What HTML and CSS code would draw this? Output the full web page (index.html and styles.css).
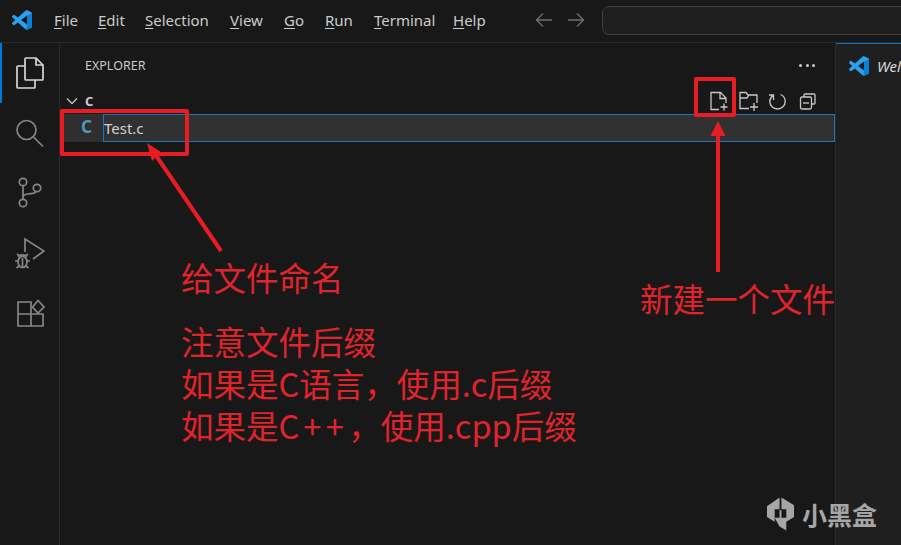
FILE: index.html
```html
<!DOCTYPE html>
<html lang="zh">
<head>
<meta charset="utf-8">
<title>VS Code</title>
<link rel="stylesheet" href="styles.css">
</head>
<body>
<div class="app">
  <header class="titlebar">
    <svg class="logo" viewBox="0 0 24 24"><path fill="#2ba1f0" d="M23.150 2.587 18.210.21a1.494 1.494 0 0 0-1.705.29l-9.460 8.630-4.120-3.128a.999.999 0 0 0-1.276.057L.327 7.261A1 1 0 0 0 .326 8.740L3.899 12 .326 15.260a1 1 0 0 0 .001 1.479L1.650 17.940a.999.999 0 0 0 1.276.057l4.120-3.128 9.460 8.630a1.492 1.492 0 0 0 1.704.29l4.942-2.377A1.500 1.500 0 0 0 24 20.060V3.939a1.500 1.500 0 0 0-.850-1.352zm-5.146 14.861L10.826 12l7.178-5.448v10.896z"/><path fill="#0b7fd0" d="M18.004 0v6.552L24 3.900v16.200a1.500 1.500 0 0 1-.850 1.313l-4.942 2.377a1.492 1.492 0 0 1-1.200.07L18.004 17.448z"/></svg>
    <nav class="menu">
      <span class="m1"><u>F</u>ile</span>
      <span class="m2"><u>E</u>dit</span>
      <span class="m3"><u>S</u>election</span>
      <span class="m4"><u>V</u>iew</span>
      <span class="m5"><u>G</u>o</span>
      <span class="m6"><u>R</u>un</span>
      <span class="m7"><u>T</u>erminal</span>
      <span class="m8"><u>H</u>elp</span>
    </nav>
    <div class="nav-arrows">
      <svg viewBox="0 0 20 20"><path d="M18 10H2.500M9 3.500 2.500 10 9 16.500"/></svg>
      <svg viewBox="0 0 20 20"><path d="M1 10h15.500M10 3.500l6.500 6.500-6.500 6.500"/></svg>
    </div>
    <div class="search"></div>
  </header>
  <div class="main">
    <aside class="activity">
      <div class="act act-on">
        <svg viewBox="0 0 30 32"><path class="bright" d="M10 9V2c0-.6.4-1 1-1h10l7 7v14c0 .6-.4 1-1 1H11c-.6 0-1-.4-1-1V9zM21 1v7h7M10 9H3c-.6 0-1 .4-1 1v20c0 .6.4 1 1 1h16c.6 0 1-.4 1-1v-7"/></svg>
      </div>
      <div class="act">
        <svg viewBox="0 0 30 32"><circle cx="11.500" cy="13" r="9.500"/><path d="m18.500 20 9.500 9.500"/></svg>
      </div>
      <div class="act">
        <svg viewBox="0 0 30 32"><circle cx="8" cy="5" r="3.700"/><circle cx="8" cy="26" r="3.700"/><circle cx="22" cy="11" r="3.700"/><path d="M8 8.700v13.600M8 21c0-2.500 1.500-3.800 4.500-4 4-.2 8-.5 8.500-2.500"/></svg>
      </div>
      <div class="act">
        <svg viewBox="0 0 30 32"><path d="M10 15V2l19 12-11 8"/><path d="M2 17l2.500 2M13 17l-2.500 2M0 24h3M15 24h-3M1.500 31 4 29M13.500 31 11 29"/><ellipse cx="7.500" cy="25" rx="4.500" ry="5.500"/><path d="M3.500 20.500c0-3.500 8-3.500 8 0M7.500 21v9.500"/></svg>
      </div>
      <div class="act">
        <svg viewBox="0 0 30 32"><path d="M3 5h13v24H3zM3 17h25v12H16M17.500 10 23 3.500 29 10l-6 6z"/></svg>
      </div>
    </aside>
    <section class="sidebar">
      <div class="explorer-head">
        <span class="explorer-title">EXPLORER</span>
        <span class="dots"><i></i><i></i><i></i></span>
      </div>
      <div class="folder-row">
        <svg class="chev" viewBox="0 0 12 8"><path d="m1 1.500 5 5 5-5"/></svg>
        <span class="folder-name">C</span>
        <div class="tools">
          <svg viewBox="0 0 20 20"><path d="M10 18.500H2V1.500h9.500L17 7v5M11 1.500V7.500h6M15 12.500v7M11.500 16h7"/></svg>
          <svg viewBox="0 0 20 20"><path d="M10 17.500H1V1.500h6l2 2.500h9v8M1 7h7l2-3M15 12v8M11 16h8"/></svg>
          <svg viewBox="0 0 20 20"><path d="M4 4.500C1.800 6 .8 8.300.8 10.500c0 4 3.400 7.500 7.700 7.500s7.700-3.500 7.700-7.500c0-3-1.800-5.800-4.700-7M4.500 9V4H0"/></svg>
          <svg viewBox="0 0 20 20"><path d="M5 6V4c0-.5.500-1 1-1h9c.500 0 1 .5 1 1v8c0 .5-.5 1-1 1h-2"/><rect x="1.500" y="6" width="11" height="12" rx="1.500"/><path d="M4 12h6"/></svg>
        </div>
      </div>
      <div class="file-row">
        <span class="file-icon">C</span>
        <span class="file-input">Test.c</span>
      </div>
    </section>
    <section class="editor">
      <div class="tab">
        <svg class="tab-logo" viewBox="0 0 24 24"><path fill="#2ba1f0" d="M23.150 2.587 18.210.21a1.494 1.494 0 0 0-1.705.29l-9.460 8.630-4.120-3.128a.999.999 0 0 0-1.276.057L.327 7.261A1 1 0 0 0 .326 8.740L3.899 12 .326 15.260a1 1 0 0 0 .001 1.479L1.650 17.940a.999.999 0 0 0 1.276.057l4.120-3.128 9.460 8.630a1.492 1.492 0 0 0 1.704.29l4.942-2.377A1.500 1.500 0 0 0 24 20.060V3.939a1.500 1.500 0 0 0-.850-1.352zm-5.146 14.861L10.826 12l7.178-5.448v10.896z"/><path fill="#0b7fd0" d="M18.004 0v6.552L24 3.900v16.200a1.500 1.500 0 0 1-.850 1.313l-4.942 2.377a1.492 1.492 0 0 1-1.200.07L18.004 17.448z"/></svg>
        <span class="tab-title">Welcome</span>
      </div>
    </section>
  </div>
  <div class="box box-file"></div>
  <div class="box box-new"></div>
  <svg class="arrows" viewBox="0 0 901 545">
    <path class="shaft" d="M221 251 155 154M718 272V130"/>
    <path class="head" d="M147 143 161 152 152 161zM718 121 725.500 136H710.500z"/>
  </svg>
  <p class="note note-name">给文件命名</p>
  <p class="note note-new">新建一个文件</p>
  <div class="note note-suffix">
    <p>注意文件后缀</p>
    <p>如果是C语言，使用.c后缀</p>
    <p>如果是C<span class="plus">++</span>，使用.cpp后缀</p>
  </div>
  <div class="watermark">
    <svg viewBox="0 0 30 36"><path fill="#a6a6a6" d="M14 1v12H9v13l-8-5V10zM16 1l13 8v12l-8 5V13h-5zM9 22h12v13l-7-4z"/><path fill="#a6a6a6" d="M14 14v8h2v-8z"/></svg>
    <span>小黑盒</span>
  </div>
</div>
</body>
</html>
```
FILE: styles.css
```css
* { box-sizing: border-box; }
html, body { margin: 0; padding: 0; background: #181818; }
body { font-family: "Noto Sans", "Noto Sans CJK SC", sans-serif; }
p { margin: 0; }
svg { display: block; }

.app { position: relative; width: 901px; height: 545px; overflow: hidden; display: flex; flex-direction: column; background: #181818; }

.titlebar { height: 43px; flex: none; display: flex; align-items: center; border-bottom: 1px solid #2b2b2b; padding-bottom: 2px; }
.logo { width: 20px; height: 20px; margin-left: 12px; flex: none; }
.menu { display: flex; margin-left: 22px; font-size: 15px; color: #cccccc; height: 20px; line-height: 20px; }
.menu u { text-underline-offset: 2px; text-decoration-thickness: 1px; }
.m1 { width: 44px; } .m2 { width: 47px; } .m3 { width: 85px; } .m4 { width: 54px; }
.m5 { width: 41px; } .m6 { width: 49px; } .m7 { width: 79px; } .m8 { width: 40px; }
.nav-arrows { display: flex; gap: 13px; margin-left: 41px; }
.nav-arrows svg { width: 20px; height: 20px; fill: none; stroke: #6f6f6f; stroke-width: 1.400; }
.search { width: 320px; height: 29px; margin-left: 15px; flex: none; background: #1f1f1f; border: 1px solid #3f3f3f; border-radius: 7px; }

.main { flex: 1; display: flex; min-height: 0; }

.activity { width: 60px; flex: none; border-right: 1px solid #2b2b2b; }
.act { height: 60px; display: flex; align-items: center; justify-content: center; }
.act svg { width: 30px; height: 32px; fill: none; stroke: #868686; stroke-width: 1.700; }
.act svg .bright { stroke: #d7d7d7; }
.act-on { box-shadow: inset 2px 0 0 #0078d4; }

.sidebar { width: 775px; flex: none; }
.explorer-head { height: 44px; display: flex; align-items: center; justify-content: space-between; padding: 0 20px 0 25px; }
.explorer-title { font-size: 12.500px; color: #cccccc; }
.dots { display: flex; gap: 3.500px; }
.dots i { width: 3px; height: 3px; border-radius: 50%; background: #cccccc; }

.folder-row { height: 28px; display: flex; align-items: center; }
.chev { width: 12px; height: 8px; margin-left: 6px; fill: none; stroke: #c0c0c0; stroke-width: 1.400; }
.folder-name { margin-left: 7px; font-size: 13px; font-weight: 700; color: #cccccc; }
.tools { margin-left: auto; margin-right: 16px; display: flex; gap: 10px; }
.tools svg { width: 20px; height: 20px; fill: none; stroke: #c8c8c8; stroke-width: 1.300; }

.file-row { height: 28px; display: flex; align-items: stretch; background: #2f2f2f; margin-top: -1px; }
.file-icon { width: 43px; padding-left: 21px; font-size: 17px; font-weight: 700; color: #519aba; line-height: 26px; }
.file-input { flex: 1; border: 1px solid #1b75bb; font-size: 15px; color: #d0d0d0; line-height: 26px; background: #313131; }

.editor { flex: 1; background: #1f1f1f; border-left: 1px solid #2b2b2b; min-width: 0; overflow: hidden; }
.tab { height: 44px; border-top: 1px solid #0078d4; display: flex; align-items: center; background: #1f1f1f; white-space: nowrap; }
.tab-logo { width: 20px; height: 20px; margin-left: 13px; flex: none; }
.tab-title { margin-left: 8px; font-size: 15px; font-style: italic; color: #d8d8d8; }

.box { position: absolute; border: 4px solid #e81c24; border-radius: 2px; }
.box-file { left: 60px; top: 109px; width: 129px; height: 47px; }
.box-new { left: 694px; top: 77px; width: 42px; height: 40px; }

.arrows { position: absolute; left: 0; top: 0; width: 901px; height: 545px; pointer-events: none; }
.shaft { fill: none; stroke: #e81c24; stroke-width: 4; }
.head { fill: #e81c24; }

.note { position: absolute; font-family: "Noto Sans CJK SC", sans-serif; font-size: 32.500px; line-height: 42px; color: #e0242b; white-space: nowrap; }
.note-name { left: 181px; top: 256px; }
.note-new { left: 640px; top: 277px; }
.note-suffix { left: 181px; top: 320px; }
.plus { letter-spacing: 4.500px; margin-left: 4px; }

.watermark { position: absolute; left: 766px; top: 496px; display: flex; align-items: center; gap: 7px; color: #a6a6a6; font-family: "Noto Sans CJK SC", sans-serif; font-size: 25px; font-weight: 700; line-height: 36px; }
.watermark svg { width: 29px; height: 36px; }
```
